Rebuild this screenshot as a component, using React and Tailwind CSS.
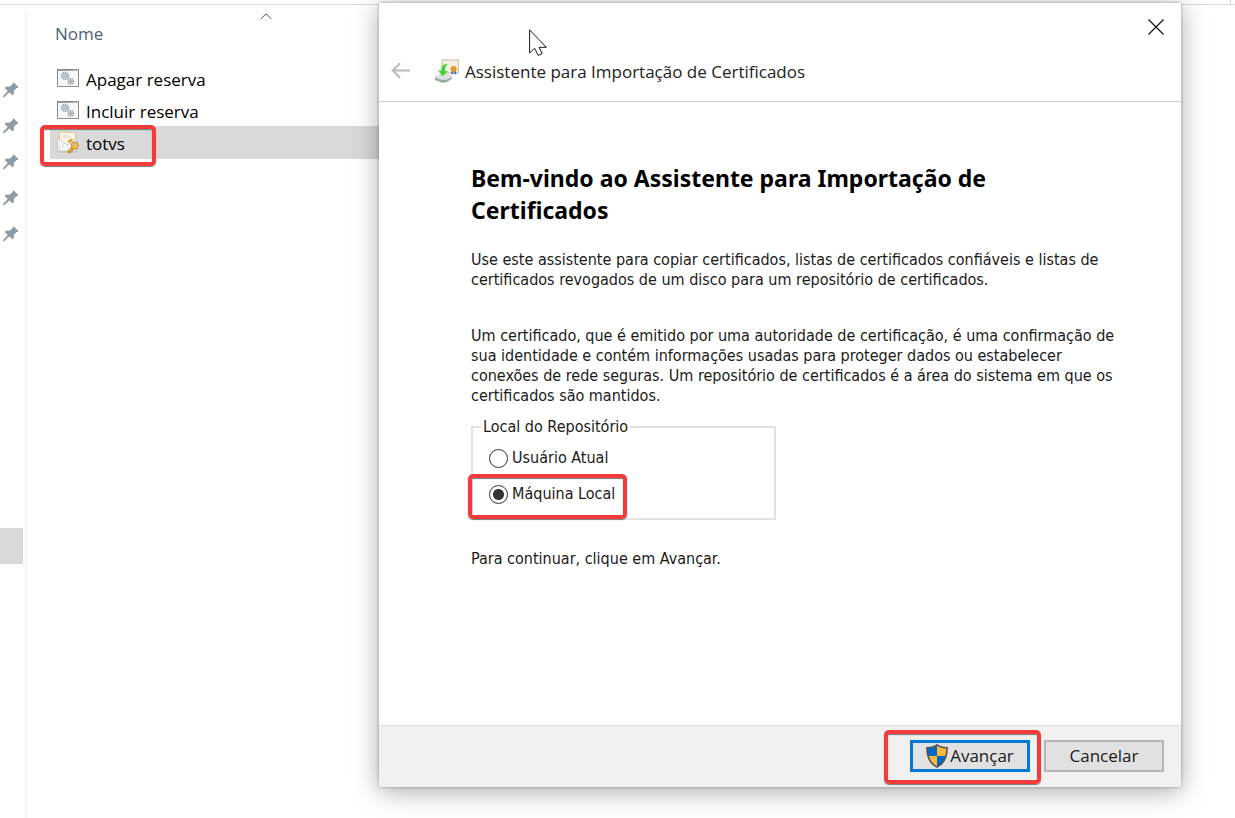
const pinnedFolders = ['Fixado 1', 'Fixado 2', 'Fixado 3', 'Fixado 4', 'Fixado 5']

function PinIcon() {
  return (
    <svg className="h-4 w-4" viewBox="0 0 16 16" fill="#8f9aa2" aria-hidden="true">
      <path d="M10 0L15.8 5.2L13.4 6.2L10.8 9L11 12L9.5 13.3L6.3 10.6L1.4 15L0 15.2L.3 13.8L4.8 9L1.6 5.9L3 4.6L6.3 4.8L9.6 2.3Z" />
    </svg>
  )
}

function Gear({ cx, cy, r }) {
  return (
    <g fill="none" stroke="#8a979e">
      <circle cx={cx} cy={cy} r={r} strokeWidth="1.5" strokeDasharray="1.1 0.9" />
      <circle cx={cx} cy={cy} r={r - 1.2} strokeWidth="0.8" fill="#dfe7ea" />
      <circle cx={cx} cy={cy} r="0.8" strokeWidth="0.7" fill="#fff" />
    </g>
  )
}

function BatchIcon() {
  return (
    <svg className="h-[18px] w-[22px]" viewBox="0 0 22 18" aria-hidden="true">
      <rect x="0.5" y="0.5" width="21" height="17" fill="#f8f8f8" stroke="#8b8f92" />
      <path d="M0 1H22" stroke="#7f8487" strokeWidth="1.4" />
      <path d="M16 1.2h1M18 1.2h1M20 1.2h1" stroke="#fff" strokeWidth="0.8" />
      <Gear cx={8} cy={6.8} r={3.5} />
      <Gear cx={13.7} cy={12.4} r={2.8} />
    </svg>
  )
}

function CertificateFileIcon() {
  return (
    <svg className="h-[23px] w-[23px]" viewBox="0 0 23 23" aria-hidden="true">
      <path d="M1 20.5H21V22H2Z" fill="#aaa" opacity="0.6" />
      <path d="M2.5 0.8H19V14H2.5Z" fill="#fcf6e9" stroke="#dfc596" />
      <path d="M6 3.8H12M6 5.8H15" stroke="#ccc" strokeWidth="0.8" />
      <path d="M.7 6.8L11 14L20.8 6.8V20.7H.7Z" fill="#f4f4f4" stroke="#bdbdbd" strokeWidth="0.8" />
      <path d="M11 10.5l3-2.9 2.8.6-1.9 2.7-2.8.8Z" fill="#d4a12c" />
      <path d="M1 20.5L8 12M20.5 20.5L14 12" stroke="#ccc" strokeWidth="0.7" />
      <path d="M15.7 15.8L11.6 20.2L12 22.5L14.2 22.1L14.5 20.7L15.8 20.4L17.6 17.8Z" fill="#e5a83c" stroke="#a96f1b" strokeWidth="0.7" />
      <ellipse cx="18.6" cy="14.6" rx="3.7" ry="3.9" fill="#f0bb55" stroke="#b67a20" strokeWidth="0.8" />
      <circle cx="19.5" cy="13.5" r="1.1" fill="#fff" stroke="#a96f1b" strokeWidth="0.5" />
    </svg>
  )
}

function ImportIcon() {
  return (
    <svg className="h-6 w-6 shrink-0" viewBox="0 0 24 24" aria-hidden="true">
      <path d="M7.3 1H23.3V13.8H7.3Z" fill="#f6f2e8" stroke="#d9cdb8" strokeWidth="1.6" />
      <path d="M0 18L5 15.5H14L17 18V20L11 23.5H6L0 21Z" fill="#a4a9ac" />
      <path d="M0 18L5 15.5H14L17 18L11 20.8H6Z" fill="#dfe2e3" />
      <path d="M7 23v-1.5h2V23" fill="#4cc23c" />
      <path d="M11.5 5C7.5 5.5 6 8 6.3 11.5L3.3 11.3L7.5 17.3L13 12.5L10 11.8C9.8 9 10.5 7 12.5 5.5Z" fill="#43cf3c" stroke="#8be080" strokeWidth="0.6" />
      <path d="M17.5 11.5L16.5 15L18.4 14.2M20 11.5L21 15L19 14.2" fill="#3d73c8" stroke="#3d73c8" />
      <circle cx="18.6" cy="10" r="2.7" fill="#e9a01f" stroke="#c9811a" strokeWidth="0.6" />
    </svg>
  )
}

function ShieldIcon() {
  return (
    <svg className="h-6 w-[22px] shrink-0" viewBox="0 0 22 24" aria-hidden="true">
      <path d="M11 .9C8.5 2.8 4.8 3.7 1 3.7C.8 12 2.7 19 11 23.1C19.3 19 21.2 12 21 3.7C17.2 3.7 13.5 2.8 11 .9Z" fill="#0067c5" />
      <path d="M11 .9C13.5 2.8 17.2 3.7 21 3.7C21.1 6.8 20.9 9.6 20.1 12H11Z" fill="#fdb935" />
      <path d="M11 12V23.1C5.7 20.5 3 16.7 1.9 12Z" fill="#fdb935" />
      <path d="M11 .9C8.5 2.8 4.8 3.7 1 3.7C.8 12 2.7 19 11 23.1C19.3 19 21.2 12 21 3.7C17.2 3.7 13.5 2.8 11 .9Z" fill="none" stroke="#545454" strokeWidth="1.6" />
    </svg>
  )
}

function Highlight({ className }) {
  return (
    <span
      className={`pointer-events-none absolute rounded-[5px] border-4 border-[#f43b3b] shadow-[0_1px_1px_#777,inset_0_1px_1px_#777] ${className}`}
    />
  )
}

function FileRow({ icon, name, selected }) {
  return (
    <li className={selected ? 'relative bg-[#d9d9d9] pb-px' : ''}>
      <a href="#" className="flex h-8 items-center gap-[7px] pl-[7px]">
        <span className="flex w-[22px] shrink-0 justify-center">{icon}</span>
        <span className="pt-1">{name}</span>
      </a>
      {selected && <Highlight className="-left-[10px] -top-px h-[41px] w-[116px]" />}
    </li>
  )
}

function RadioOption({ label, defaultChecked }) {
  return (
    <label className="flex h-9 items-center gap-1">
      <input
        type="radio"
        name="store"
        defaultChecked={defaultChecked}
        className="h-[19px] w-[19px] shrink-0 appearance-none rounded-full border border-[#333] bg-white checked:bg-[radial-gradient(circle,#333_0_5px,#fff_6px)]"
      />
      {label}
    </label>
  )
}

function Explorer() {
  return (
    <div className="flex min-h-screen flex-col">
      <div className="flex h-[5px] shrink-0 justify-end border-b border-[#d9d9d9]">
        <div className="mr-1 w-px bg-[#d9d9d9]" />
      </div>
      <div className="flex flex-1 pt-[7px]">
        <nav className="w-[25px] shrink-0 pt-[60px]">
          <ul>
            {pinnedFolders.map((name) => (
              <li key={name}>
                <a href="#" aria-label={name} className="flex h-9 items-center pl-[3px]">
                  <PinIcon />
                </a>
              </li>
            ))}
          </ul>
          <div className="mr-[2px] mt-[276px] h-9 bg-[#d9d9d9]" />
        </nav>
        <main className="flex-1 border-l-2 border-[#f5f5f5] pl-[23px]">
          <div className="relative h-[50px] pl-[5px] pt-2 text-[17px] leading-7 text-[#4c607a]">
            Nome
            <svg className="absolute left-[210px] top-0 h-2 w-3" viewBox="0 0 12 8" fill="none" stroke="#555" aria-hidden="true">
              <path d="M.7 7L6 1.8L11.3 7" />
            </svg>
          </div>
          <ul className="max-w-[360px] text-[17px] leading-7 text-black">
            <FileRow icon={<BatchIcon />} name="Apagar reserva" />
            <FileRow icon={<BatchIcon />} name="Incluir reserva" />
            <FileRow icon={<CertificateFileIcon />} name="totvs" selected />
          </ul>
        </main>
      </div>
    </div>
  )
}

function WizardDialog() {
  return (
    <section
      role="dialog"
      aria-labelledby="wizard-title"
      className="absolute bottom-[31px] left-[379px] right-[54px] top-[3px] flex flex-col bg-white shadow-[0_4px_24px_rgba(0,0,0,0.34),0_0_3px_rgba(0,0,0,0.3)]"
    >
      <header className="flex flex-col border-b border-[#cfcfcf] pb-[14px]">
        <div className="flex h-[52px] items-start justify-end pr-[15px]">
          <button aria-label="Fechar" className="flex h-12 w-5 items-center justify-center">
            <svg className="h-4 w-4" viewBox="0 0 16 16" fill="none" stroke="#111" strokeWidth="1.2" aria-hidden="true">
              <path d="M.5.5L15.5 15.5M15.5.5L.5 15.5" />
            </svg>
          </button>
        </div>
        <div className="flex h-8 items-center pl-3">
          <button aria-label="Voltar" className="mr-6 shrink-0">
            <svg className="h-[18px] w-5" viewBox="0 0 20 18" fill="none" stroke="#b9b9b9" strokeWidth="2" aria-hidden="true">
              <path d="M19 8.5H2M9 1.3L1.7 8.5L9 15.7" />
            </svg>
          </button>
          <ImportIcon />
          <h1 id="wizard-title" className="ml-[6px] pt-[2px] text-[17px] leading-6 text-[#222]">
            Assistente para Importação de Certificados
          </h1>
        </div>
      </header>

      <div className="flex-1 pl-[92px] pr-10 pt-[60px] font-['DejaVu_Sans_Condensed','Noto_Sans',sans-serif] text-[16px] leading-5 text-[#1a1a1a]">
        <h2 className="max-w-[560px] font-['Noto_Sans',sans-serif] text-[23px] font-bold leading-8 text-black">
          Bem-vindo ao Assistente para Importação de Certificados
        </h2>
        <p className="mt-6">
          Use este assistente para copiar certificados, listas de certificados confiáveis e listas de
          <br />
          certificados revogados de um disco para um repositório de certificados.
        </p>
        <p className="mt-9">
          Um certificado, que é emitido por uma autoridade de certificação, é uma confirmação de
          <br />
          sua identidade e contém informações usadas para proteger dados ou estabelecer
          <br />
          conexões de rede seguras. Um repositório de certificados é a área do sistema em que os
          <br />
          certificados são mantidos.
        </p>
        <fieldset className="mt-[11px] w-[305px] border-2 border-[#e2e2e2] pb-[6px] pl-4 pt-[3px]">
          <legend className="-ml-2 px-[2px]">Local do Repositório</legend>
          <RadioOption label="Usuário Atual" />
          <div className="relative">
            <RadioOption label="Máquina Local" defaultChecked />
            <Highlight className="-left-[21px] -top-[2px] h-[45px] w-[159px]" />
          </div>
        </fieldset>
        <p className="mt-[29px]">Para continuar, clique em Avançar.</p>
      </div>

      <footer className="flex h-[62px] shrink-0 items-center justify-end gap-[14px] border-t border-[#dfdfdf] bg-[#f0f0f0] pb-[2px] pr-[17px] text-[17px] leading-6 text-[#1a1a1a]">
        <div className="relative">
          <button className="flex h-8 w-[120px] items-center justify-center border-[3px] border-[#0078d7] bg-[#e1e1e1]">
            <ShieldIcon />
            <span className="ml-[2px]">Avançar</span>
          </button>
          <Highlight className="-left-[26px] -top-[10px] h-[54px] w-[157px]" />
        </div>
        <button className="h-8 w-[120px] border-2 border-[#b5b5b5] bg-[#e1e1e1]">Cancelar</button>
      </footer>
    </section>
  )
}

export default function App() {
  return (
    <div className="relative min-h-screen overflow-hidden bg-white font-['Open_Sans','Noto_Sans',sans-serif]">
      <Explorer />
      <WizardDialog />
      <svg className="pointer-events-none absolute left-[529px] top-[29px] h-[27px] w-[19px]" viewBox="0 0 19 27" aria-hidden="true">
        <path d="M.6.8V24L5.6 19.2L9.2 26.4L13.2 24.6L10 18.3H17.3Z" fill="#fff" stroke="#171727" strokeWidth="1" />
      </svg>
    </div>
  )
}
